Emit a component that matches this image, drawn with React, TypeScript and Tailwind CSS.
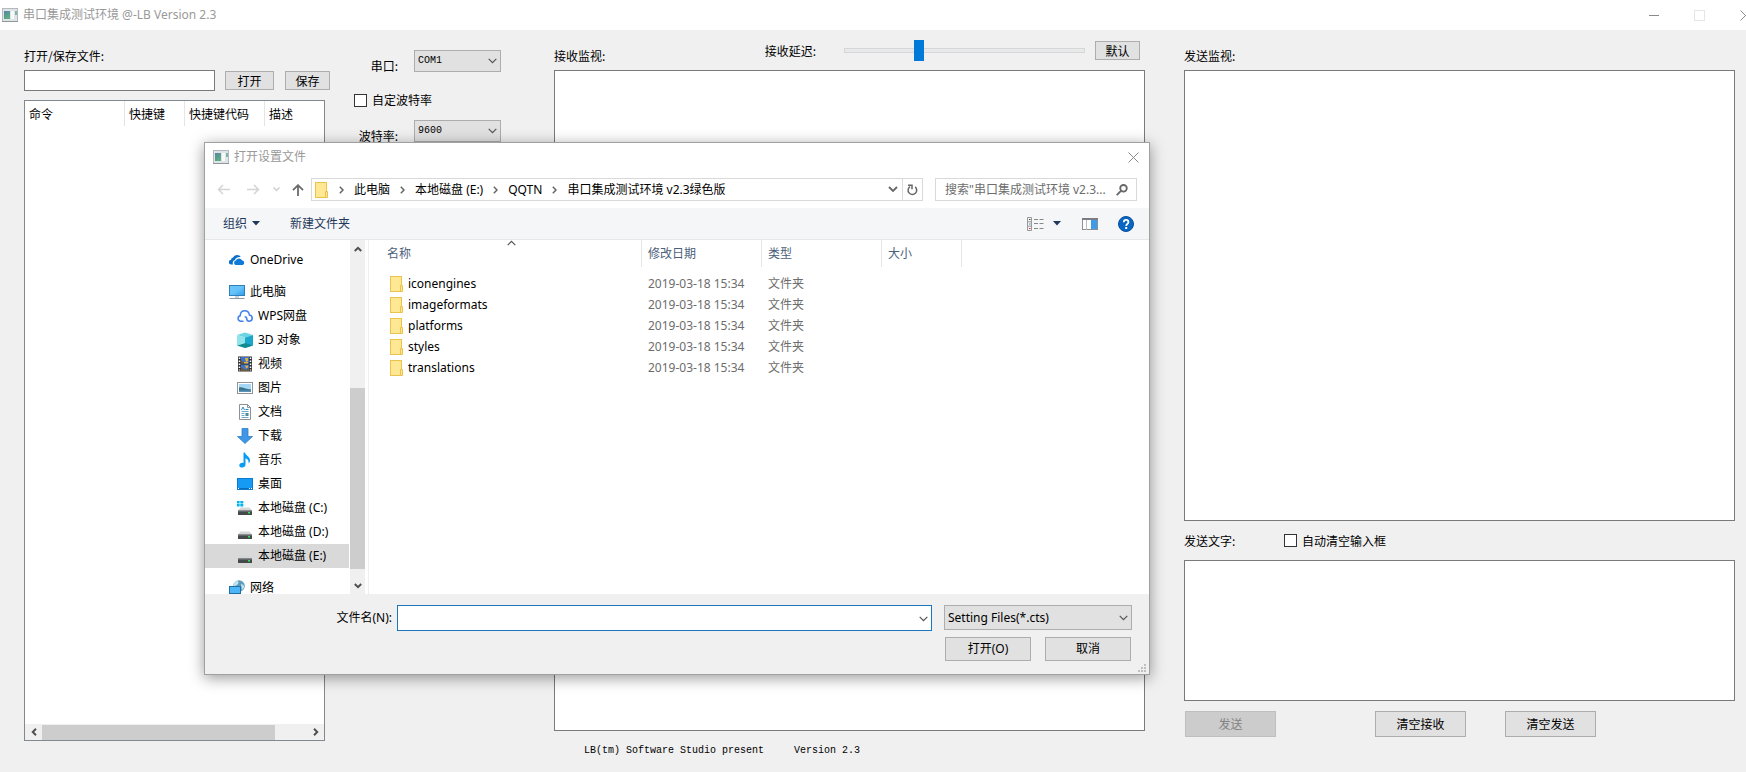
import { useState } from "react";
import type { ReactNode } from "react";

const files = ["iconengines", "imageformats", "platforms", "styles", "translations"];
const crumbs = ["此电脑", "本地磁盘 (E:)", "QQTN", "串口集成测试环境 v2.3绿色版"];

function AppIcon() {
  return (
    <svg width="16" height="14" viewBox="0 0 16 14" className="shrink-0">
      <defs>
        <linearGradient id="appicon" x1="0" y1="0" x2="0.6" y2="1">
          <stop offset="0" stopColor="#5585a8" />
          <stop offset="1" stopColor="#5fae80" />
        </linearGradient>
      </defs>
      <rect x="0.5" y="0.5" width="15" height="13" fill="#dfe4e8" stroke="#b3b9bd" />
      <rect x="2" y="3" width="6" height="8" fill="url(#appicon)" />
      <rect x="9" y="3" width="3" height="8" fill="#f8fafa" />
      <rect x="13" y="3" width="2" height="4" fill="#7fb5a3" />
      <path d="M0 13.5h16" stroke="#8f979b" />
    </svg>
  );
}

function FolderIcon() {
  return (
    <svg width="14" height="16" viewBox="0 0 14 16" className="shrink-0">
      <rect x="0.5" y="0.5" width="11" height="15" fill="#ffe794" stroke="#e9c34b" />
      <path d="M10.5 15.5v-6h2v6z" fill="#ffe794" stroke="#e9c34b" />
    </svg>
  );
}

function Chevron({ className = "", color = "#555", flip = "" }) {
  return (
    <svg width="9" height="6" viewBox="0 0 9 6" fill="none" className={`${flip} ${className}`}>
      <path d="M0.7 0.8 4.5 4.7 8.3 0.8" stroke={color} strokeWidth="1.2" />
    </svg>
  );
}

function ScrollArrow({ turn = "" }) {
  return (
    <svg width="8" height="6" viewBox="0 0 8 6" fill="none" className={turn}>
      <path d="M0.8 1 4 4.2 7.2 1" stroke="#505050" strokeWidth="2" />
    </svg>
  );
}

function Drive({ win = false }) {
  return (
    <svg width="16" height="16" viewBox="0 0 16 16">
      <path d="M3.5 7.5h9L15 10.5H1z" fill="#d4d6d8" />
      <rect x="1" y="10.5" width="14" height="4.5" fill="#45494b" />
      <rect x="1" y="10.5" width="14" height="1" fill="#7e8284" />
      <rect x="11" y="12" width="2" height="1.5" fill="#35e052" />
      {win && <path d="M0 1h2.6v2.4H0zM3.3 1h3v2.4h-3zM0 4.1h2.6v2.4H0zM3.3 4.1h3v2.4h-3z" fill="#00b4ee" />}
    </svg>
  );
}

const icons: Record<string, ReactNode> = {
  onedrive: (
    <svg width="16" height="16" viewBox="0 0 16 16">
      <path d="M4 12.5H2.2A2.2 2.2 0 0 1 1.9 8 3 3 0 0 1 4 5.6A4.5 4.5 0 0 1 12 5.2C9 4.8 6.5 6 6 8 4 8.4 3.3 10.5 4 12.5z" fill="#0a6fc9" />
      <path d="M6.6 13A2.3 2.3 0 0 1 6.8 8.6 3.4 3.4 0 0 1 13 8.2 2.5 2.5 0 0 1 13.7 13z" fill="#0f7ad8" />
    </svg>
  ),
  pc: (
    <svg width="16" height="16" viewBox="0 0 16 16">
      <defs>
        <linearGradient id="screen" x1="0" y1="0" x2="1" y2="1">
          <stop offset="0" stopColor="#6cc8f7" />
          <stop offset="0.5" stopColor="#66c2f8" />
          <stop offset="1" stopColor="#2e9be8" />
        </linearGradient>
      </defs>
      <rect x="0.5" y="1.5" width="15" height="10" fill="url(#screen)" stroke="#2f7fb8" />
      <path d="M6 12.5h4v1H6z" fill="#8fa3b0" />
      <path d="M0.5 14.5h15" stroke="#8b9ba6" />
    </svg>
  ),
  wps: (
    <svg width="16" height="16" viewBox="0 0 16 16" fill="none" stroke="#3f7fee" strokeWidth="1.5">
      <path d="M6.5 13.2H3.5a2.8 2.8 0 0 1-.3-5.5C3.3 4.6 5.2 2.8 7.8 2.8c2.500 0 4.300 1.700 4.600 4.200 1.700.3 2.800 1.500 2.800 3.100 0 1.800-1.300 3.100-3 3.100-1.500 0-2.400-.9-2.400-2.200 0-1.400-.9-2.200-2.200-2.200" />
    </svg>
  ),
  cube: (
    <svg width="16" height="16" viewBox="0 0 16 16">
      <path d="M0 3 8 0.5 16 3 8 5.5z" fill="#6cd3e2" />
      <path d="M0 3l8 2.500V16l-8-2.500z" fill="#b0edf2" />
      <path d="M16 3 8 5.500V16l8-2.500z" fill="#1ba6cc" />
      <path d="M0 13.500l8-2.500 8 2.500L8 16z" fill="#128a93" />
      <path d="M0 13.500 8 11V5.500L0 3z" fill="#8fe3ea" />
    </svg>
  ),
  video: (
    <svg width="16" height="16" viewBox="0 0 16 16">
      <rect x="1" y="0.5" width="14" height="15" fill="#333" />
      <rect x="4" y="1" width="8" height="14" fill="#3c72cf" />
      <path d="M4 8h8" stroke="#222" />
      <path d="M8 2h3v3l-2 1zM7 6h4v1.500H7z" fill="#e0b13b" />
      <path d="M8 9.500h3v2l-2 1z" fill="#e0b13b" />
      <path d="M4 4l3 2v1.500H4zM4 11l4 3 4-2v3H4z" fill="#6e5a3c" />
      <path d="M2.5 1.5v13M13.5 1.5v13" stroke="#fff" strokeWidth="1.5" strokeDasharray="1.5 1.5" />
    </svg>
  ),
  picture: (
    <svg width="16" height="16" viewBox="0 0 16 16">
      <rect x="0.5" y="2.5" width="15" height="11" fill="#fff" stroke="#8f9498" />
      <rect x="2" y="4" width="12" height="8" fill="#a5d6f5" />
      <path d="M2 7.500c3-1 6 1.500 12 2V11H2z" fill="#35748a" />
      <path d="M2 10.500h12V12H2z" fill="#5d93bd" />
    </svg>
  ),
  document: (
    <svg width="16" height="16" viewBox="0 0 16 16">
      <path d="M2.5 0.5h8l3 3v12h-11z" fill="#fff" stroke="#8c9196" />
      <path d="M10.5 0.5v3h3" fill="none" stroke="#8c9196" />
      <path d="M4.5 7.5h7M4.5 9.5h3M4.5 11.5h3M4.5 13.5h7" stroke="#6ea9cf" />
      <path d="M4.5 6 6 3l1.5 3" fill="none" stroke="#2f8cc9" />
      <path d="M8.5 5.5h3" stroke="#2f8cc9" />
      <rect x="8.5" y="9" width="3" height="3" fill="#4d8c93" />
    </svg>
  ),
  download: (
    <svg width="16" height="16" viewBox="0 0 16 16">
      <path d="M5 0.5h6v8h4.5L8 15.5.5 8.5H5z" fill="#3f96e4" stroke="#2f80cb" strokeWidth="0.8" />
    </svg>
  ),
  music: (
    <svg width="16" height="16" viewBox="0 0 16 16" fill="#0a9bf5">
      <path d="M6.5 0.5H8c.3 2.5 4.8 4 5 7.5.1 1.5-.5 2.8-1.4 3.6.6-2.4-.9-4.6-3.1-5.4V12.500c0 1.800-1.500 3-3.400 3-1.600 0-2.800-.8-2.800-2.100 0-1.800 2-3 4.200-2.500z" />
    </svg>
  ),
  desktop: (
    <svg width="16" height="16" viewBox="0 0 16 16">
      <rect x="0.5" y="2.5" width="15" height="11" fill="#169bf5" stroke="#0a7bd0" />
      <path d="M1 12.5h14" stroke="#0b6cb8" />
      <path d="M1 12.5h1M12 12.5h1M14 12.5h1" stroke="#fff" />
    </svg>
  ),
  driveWin: <Drive win />,
  drive: <Drive />,
  network: (
    <svg width="16" height="16" viewBox="0 0 16 16">
      <circle cx="10" cy="6" r="5.8" fill="#5f9dbd" />
      <path d="M7 1.2c3-1 3 2 1.500 3.300S6 6 4.600 7C4 4 5 2 7 1.200zM12 4c1.500 0 2.500 1 3 2s-1 3.500-2 4z" fill="#bfe3ee" />
      <rect x="0.5" y="6.5" width="11" height="7" fill="#4cb6f6" stroke="#1e6fa6" />
    </svg>
  ),
};

const places = [
  { name: "OneDrive", icon: "onedrive", root: true },
  { name: "此电脑", icon: "pc", root: true },
  { name: "WPS网盘", icon: "wps" },
  { name: "3D 对象", icon: "cube" },
  { name: "视频", icon: "video" },
  { name: "图片", icon: "picture" },
  { name: "文档", icon: "document" },
  { name: "下载", icon: "download" },
  { name: "音乐", icon: "music" },
  { name: "桌面", icon: "desktop" },
  { name: "本地磁盘 (C:)", icon: "driveWin" },
  { name: "本地磁盘 (D:)", icon: "drive" },
  { name: "本地磁盘 (E:)", icon: "drive" },
  { name: "网络", icon: "network", root: true },
];

function Combo({ id, label, options }: { id: string; label: string; options: string[] }) {
  return (
    <div className="flex h-[22px] justify-end gap-4">
      <label htmlFor={id} className="mt-2 leading-4">
        {label}
      </label>
      <div className="relative">
        <select
          id={id}
          className="block h-[22px] w-[87px] appearance-none border border-[#adadad] bg-[#e1e1e1] pl-[3px] font-['Liberation_Mono',monospace] text-[10px]"
        >
          {options.map((o) => (
            <option key={o}>{o}</option>
          ))}
        </select>
        <Chevron className="pointer-events-none absolute top-2 right-1" />
      </div>
    </div>
  );
}

function OpenDialog() {
  const [selected, setSelected] = useState("本地磁盘 (E:)");
  const [fileName, setFileName] = useState("");

  return (
    <section
      role="dialog"
      aria-label="打开设置文件"
      className="absolute top-[142px] left-[204px] flex w-[946px] flex-col border border-[#a0a0a0] bg-white font-['Noto_Sans','Noto_Sans_CJK_SC',sans-serif] shadow-[0_3px_14px_rgba(0,0,0,0.4)]"
    >
      <div className="flex h-7 items-center gap-[5px] pr-[10px] pl-2 text-[#999]">
        <AppIcon />
        <h2>打开设置文件</h2>
        <button aria-label="关闭" className="ml-auto">
          <svg width="11" height="11" viewBox="0 0 11 11" stroke="#8a8a8a">
            <path d="M0.5 0.5l10 10M10.5 0.5l-10 10" />
          </svg>
        </button>
      </div>

      <div className="flex h-[37px] items-center px-3">
        <button aria-label="后退" className="mr-[17px]">
          <svg width="13" height="11" viewBox="0 0 13 11" fill="none" stroke="#d4d4d4" strokeWidth="1.5">
            <path d="M13 5.5H1.5M6 1 1.5 5.5 6 10" />
          </svg>
        </button>
        <button aria-label="前进" className="mr-[13px]">
          <svg width="13" height="11" viewBox="0 0 13 11" fill="none" stroke="#d4d4d4" strokeWidth="1.5">
            <path d="M0 5.5h11.5M7 1l4.5 4.5L7 10" />
          </svg>
        </button>
        <button aria-label="最近位置" className="mr-3">
          <svg width="7" height="5" viewBox="0 0 7 5" fill="none" stroke="#cfcfcf" strokeWidth="1.5">
            <path d="M0.5 0.5l3 3 3-3" />
          </svg>
        </button>
        <button aria-label="上移" className="mr-[7px]">
          <svg width="12" height="12" viewBox="0 0 12 12" fill="none" stroke="#6b6b6b" strokeWidth="1.8">
            <path d="M6 12V1.5M1 6.2 6 1.2l5 5" />
          </svg>
        </button>
        <div className="flex h-[23px] min-w-0 flex-1 items-center border border-[#d9d9d9] pl-[3px]">
          <FolderIcon />
          {crumbs.map((c) => (
            <div key={c} className="flex items-center">
              <svg width="5" height="8" viewBox="0 0 5 8" fill="none" stroke="#666" strokeWidth="1.5" className="mx-[10px]">
                <path d="M0.8 0.8 4 4 .8 7.2" />
              </svg>
              <button className="whitespace-nowrap">{c}</button>
            </div>
          ))}
          <button aria-label="历史记录" className="mr-1 ml-auto">
            <svg width="10" height="7" viewBox="0 0 10 7" fill="none" stroke="#666" strokeWidth="1.8">
              <path d="M1 1l4 4 4-4" />
            </svg>
          </button>
          <button aria-label="刷新" className="flex h-full w-5 items-center justify-center border-l border-[#d9d9d9]">
            <svg width="11" height="12" viewBox="0 0 11 12" fill="none" stroke="#666" strokeWidth="1.5">
              <path d="M3 2.600A4.300 4.300 0 1 0 8.200 2.900" />
              <path d="M1 1.200H5V5.200" />
            </svg>
          </button>
        </div>
        <div className="ml-3 flex h-[23px] w-[202px] items-center border border-[#d9d9d9] pr-2 pl-[9px]">
          <input
            aria-label="搜索"
            placeholder={'搜索"串口集成测试环境 v2.3...'}
            className="min-w-0 flex-1 outline-none placeholder:text-[#6d6d6d]"
          />
          <svg width="12" height="12" viewBox="0 0 12 12" fill="none" stroke="#666" strokeWidth="1.8">
            <circle cx="7.5" cy="4.3" r="3.3" />
            <path d="M5 6.8.7 11.2" />
          </svg>
        </div>
      </div>

      <div className="flex h-8 items-center border-b border-[#e5e7ea] bg-[#f5f6f7] pr-[15px] pl-[18px] text-[#1e395b]">
        <button className="flex items-center gap-[5px]">
          组织
          <svg width="8" height="5" viewBox="0 0 8 5" fill="#1e395b">
            <path d="M0 0h8L4 4.5z" />
          </svg>
        </button>
        <button className="ml-[30px]">新建文件夹</button>
        <button aria-label="更改视图" className="ml-auto flex items-center gap-[9px]">
          <svg width="17" height="14" viewBox="0 0 17 14" fill="none">
            <path d="M0.5 0.5h4v13h-4zM0.5 4.8h4M0.5 9.2h4" stroke="#999" />
            <path d="M2 2.5h1.5" stroke="#444" />
            <path d="M2 7h1.5" stroke="#2a7fd0" />
            <path d="M2 11.5h1.5" stroke="#d33" />
            <path d="M7 2.5h4M12.5 2.5h4M7 6.5h4M12.5 6.5h4M7 11.5h4M12.5 11.5h4" stroke="#888" />
          </svg>
          <svg width="8" height="5" viewBox="0 0 8 5" fill="#1e395b">
            <path d="M0 0h8L4 4.5z" />
          </svg>
        </button>
        <button aria-label="预览窗格" className="ml-[21px]">
          <svg width="16" height="12" viewBox="0 0 16 12">
            <rect x="0.5" y="0.5" width="15" height="11" fill="#fff" stroke="#8a9096" />
            <path d="M0 0h16v2H0z" fill="#777d83" />
            <path d="M4.5 2v10" stroke="#b9bdc1" />
            <rect x="9" y="2" width="6" height="9" fill="#3f9be8" />
          </svg>
        </button>
        <button aria-label="帮助" className="ml-5">
          <svg width="16" height="16" viewBox="0 0 16 16">
            <circle cx="8" cy="8" r="7.5" fill="#0a66c4" stroke="#074f9c" />
            <path d="M5.8 6.200c0-3 4.600-3 4.600 0 0 1.600-2.200 1.900-2.200 3.800" fill="none" stroke="#fff" strokeWidth="1.8" />
            <rect x="7.2" y="11" width="2" height="2" fill="#fff" />
          </svg>
        </button>
      </div>

      <div className="flex h-[354px]">
        <nav className="w-[145px] overflow-hidden pt-2 pr-px leading-3">
          {places.map((p) => (
            <button
              key={p.name}
              onClick={() => setSelected(p.name)}
              className={`flex h-6 w-full items-center gap-[5px] whitespace-nowrap ${p.root ? "pl-6 not-first:mt-2" : "pl-8"} ${
                p.name === selected ? "bg-[#d9d9d9]" : ""
              }`}
            >
              {icons[p.icon]}
              {p.name}
            </button>
          ))}
        </nav>
        <div className="flex w-[15px] flex-col items-center bg-[#f0f0f0]">
          <div className="flex h-[17px] items-center">
            <ScrollArrow turn="rotate-180" />
          </div>
          <div className="mt-auto h-[181px] w-full bg-[#cdcdcd]" />
          <div className="mt-2 flex h-[17px] items-center">
            <ScrollArrow />
          </div>
        </div>
        <div className="ml-[3px] flex-1 border-l border-[#f0f0f0]">
          <table className="w-[593px] table-fixed border-separate border-spacing-0 text-left">
            <thead>
              <tr className="text-[#4c607a]">
                <th className="relative h-[27px] w-[273px] border-r border-[#e5e5e5] p-0 pl-[18px] font-normal">
                  名称
                  <Chevron flip="rotate-180" className="absolute top-0 left-[138px]" />
                </th>
                <th className="w-[120px] border-r border-[#e5e5e5] p-0 pl-[6px] font-normal">修改日期</th>
                <th className="w-[120px] border-r border-[#e5e5e5] p-0 pl-[6px] font-normal">类型</th>
                <th className="w-20 border-r border-[#e5e5e5] p-0 pl-[6px] font-normal">大小</th>
              </tr>
            </thead>
            <tbody className="before:block before:h-[6px]">
              {files.map((f) => (
                <tr key={f} className="text-[#6d6d6d]">
                  <td className="h-[21px] p-0 pl-[21px] text-black">
                    <span className="flex items-center gap-1">
                      <FolderIcon />
                      {f}
                    </span>
                  </td>
                  <td className="p-0 pl-[6px] whitespace-nowrap">2019-03-18 15:34</td>
                  <td className="p-0 pl-[6px]">文件夹</td>
                  <td />
                </tr>
              ))}
            </tbody>
          </table>
        </div>
      </div>

      <div className="relative bg-[#f0f0f0] pt-[11px] pr-[17px] pb-[13px]">
        <div className="flex items-start">
          <label htmlFor="filename" className="mr-[5px] w-[187px] text-right leading-[26px]">
            文件名(N):
          </label>
          <div className="relative flex-1">
            <input
              id="filename"
              value={fileName}
              onChange={(e) => setFileName(e.target.value)}
              className="block h-[26px] w-full border border-[#1a76c0] bg-white px-1 outline-none"
            />
            <Chevron className="pointer-events-none absolute top-[11px] right-1" />
          </div>
          <div className="relative ml-3">
            <select aria-label="文件类型" className="block h-[25px] w-[188px] appearance-none border border-[#adadad] bg-[#e1e1e1] pl-[3px]">
              <option>Setting Files(*.cts)</option>
            </select>
            <Chevron className="pointer-events-none absolute top-[10px] right-1" />
          </div>
        </div>
        <div className="mt-[6px] flex justify-end gap-[14px] pr-px">
          <button className="h-6 w-[86px] border border-[#adadad] bg-[#e1e1e1]">打开(O)</button>
          <button className="h-6 w-[86px] border border-[#adadad] bg-[#e1e1e1]">取消</button>
        </div>
        <svg width="8" height="8" viewBox="0 0 8 8" fill="#bfbfbf" className="absolute right-[3px] bottom-[2px]">
          <path d="M6 0h2v2H6zM3 3h2v2H3zM6 3h2v2H6zM0 6h2v2H0zM3 6h2v2H3zM6 6h2v2H6z" />
        </svg>
      </div>
    </section>
  );
}

export default function App() {
  const [delay, setDelay] = useState(30);

  return (
    <div className="relative flex h-screen min-h-[700px] flex-col overflow-hidden bg-[#f0f0f0] font-['Noto_Sans_CJK_SC',sans-serif] text-xs leading-4 text-black">
      <header className="flex h-[30px] items-center bg-white pl-[2px] text-[#999]">
        <AppIcon />
        <h1 className="ml-[5px] font-['Noto_Sans','Noto_Sans_CJK_SC',sans-serif]">串口集成测试环境 @-LB Version 2.3</h1>
        <div className="-mr-[5px] ml-auto flex items-center gap-[35px]">
          <button aria-label="最小化">
            <svg width="10" height="11" viewBox="0 0 10 11" stroke="#8a8a8a">
              <path d="M0 5.5h10" />
            </svg>
          </button>
          <button aria-label="最大化" disabled>
            <svg width="11" height="11" viewBox="0 0 11 11" fill="none" stroke="#e6e6e6">
              <rect x="0.5" y="0.5" width="10" height="10" />
            </svg>
          </button>
          <button aria-label="关闭">
            <svg width="11" height="11" viewBox="0 0 11 11" stroke="#8a8a8a">
              <path d="M0.5 0.5l10 10M10.5 0.5l-10 10" />
            </svg>
          </button>
        </div>
      </header>

      <main className="flex min-h-0 flex-1 pt-[10px] pr-[11px] pl-6">
        {/* command file */}
        <section className="flex w-[306px] flex-col pt-2 pb-[31px]">
          <label htmlFor="path">打开/保存文件:</label>
          <div className="mt-[6px] flex h-[21px] items-center">
            <input id="path" className="h-full w-[191px] border border-[#7a7a7a] bg-white px-1" />
            <button className="ml-[10px] h-[19px] w-[49px] border border-[#adadad] bg-[#e1e1e1]">打开</button>
            <button className="ml-auto h-[19px] w-[45px] border border-[#adadad] bg-[#e1e1e1]">保存</button>
          </div>
          <div className="mt-[9px] flex w-[301px] flex-1 flex-col border border-[#828790] bg-white">
            <table className="w-full table-fixed border-separate border-spacing-0 text-left">
              <thead>
                <tr>
                  <th className="h-[25px] w-[100px] border-r border-[#e5e5e5] p-0 pl-1 font-normal">命令</th>
                  <th className="w-[60px] border-r border-[#e5e5e5] p-0 pl-1 font-normal">快捷键</th>
                  <th className="w-20 border-r border-[#e5e5e5] p-0 pl-1 font-normal">快捷键代码</th>
                  <th className="p-0 pl-1 font-normal">描述</th>
                </tr>
              </thead>
            </table>
            <div className="mt-auto flex h-4 items-center bg-[#f0f0f0]">
              <div className="flex w-[17px] justify-center">
                <ScrollArrow turn="rotate-90" />
              </div>
              <div className="h-[15px] w-[233px] bg-[#cdcdcd]" />
              <div className="ml-auto flex w-[17px] justify-center">
                <ScrollArrow turn="-rotate-90" />
              </div>
            </div>
          </div>
        </section>

        {/* port parameters */}
        <section className="ml-6 w-[147px] pt-[10px]">
          <Combo id="port" label="串口:" options={["COM1", "COM2", "COM3"]} />
          <label className="mt-5 mb-3 flex items-center gap-[5px]">
            <input type="checkbox" className="size-[13px] appearance-none border border-[#333] bg-white" />
            自定波特率
          </label>
          <Combo id="baud" label="波特率:" options={["9600", "19200", "115200"]} />
        </section>

        {/* receive monitor */}
        <section className="ml-[53px] flex flex-[591] flex-col">
          <div className="flex h-[30px] items-start">
            <label htmlFor="received" className="mt-2">
              接收监视:
            </label>
            <div className="mr-[5px] ml-auto flex h-[21px] items-center">
              <label htmlFor="delay">接收延迟:</label>
              <input
                id="delay"
                type="range"
                value={delay}
                onChange={(e) => setDelay(Number(e.target.value))}
                className="ml-7 h-[21px] w-[241px] appearance-none bg-transparent [&::-webkit-slider-runnable-track]:h-[5px] [&::-webkit-slider-runnable-track]:border [&::-webkit-slider-runnable-track]:border-[#d6d6d6] [&::-webkit-slider-runnable-track]:bg-[#e7eaea] [&::-webkit-slider-thumb]:-mt-[9px] [&::-webkit-slider-thumb]:h-[21px] [&::-webkit-slider-thumb]:w-[10px] [&::-webkit-slider-thumb]:appearance-none [&::-webkit-slider-thumb]:bg-[#007ad9]"
              />
              <button onClick={() => setDelay(30)} className="ml-[10px] h-[19px] w-[45px] border border-[#adadad] bg-[#e1e1e1]">
                默认
              </button>
            </div>
          </div>
          <textarea id="received" readOnly className="block w-full flex-1 resize-none border border-[#7a7a7a] bg-white p-1" />
          <footer className="flex h-[41px] gap-[30px] pl-[30px] font-['Liberation_Mono',monospace] text-[10px] leading-10">
            <span>LB(tm) Software Studio present</span>
            <span>Version 2.3</span>
          </footer>
        </section>

        {/* send */}
        <section className="ml-[39px] flex flex-[551] flex-col pt-2 pb-[35px]">
          <label htmlFor="sent">发送监视:</label>
          <textarea id="sent" readOnly className="mt-[6px] block w-full flex-1 resize-none border border-[#7a7a7a] bg-white p-1" />
          <div className="flex h-[39px] items-center">
            <label htmlFor="message" className="w-[100px]">
              发送文字:
            </label>
            <label className="flex items-center gap-[5px]">
              <input type="checkbox" className="size-[13px] appearance-none border border-[#333] bg-white" />
              自动清空输入框
            </label>
          </div>
          <textarea id="message" className="block h-[141px] w-full resize-none border border-[#7a7a7a] bg-white p-1" />
          <div className="mt-[10px] flex pl-px">
            <button disabled className="h-[26px] w-[91px] border border-[#bfbfbf] bg-[#ccc] text-[#838383]">
              发送
            </button>
            <button className="ml-[99px] h-[26px] w-[91px] border border-[#adadad] bg-[#e1e1e1]">清空接收</button>
            <button className="ml-[39px] h-[26px] w-[91px] border border-[#adadad] bg-[#e1e1e1]">清空发送</button>
          </div>
        </section>
      </main>

      <OpenDialog />
    </div>
  );
}
